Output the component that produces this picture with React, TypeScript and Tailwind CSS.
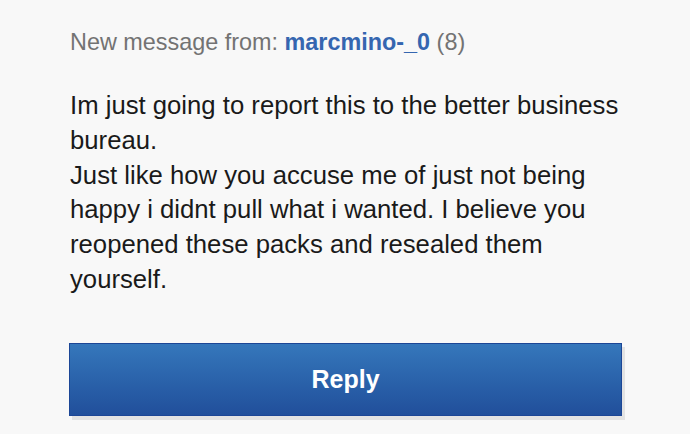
export default function App() {
  return (
    <div className="min-h-[434px] w-[690px] bg-[#f8f8f8] font-['Liberation_Sans',Arial,sans-serif]">
      <div className="pl-[70px] pr-[58px] pt-[28px]">
        <p className="text-[23.4px] leading-[28px] text-[#737373]">
          New message from: <span className="font-bold text-[#3566b0]">marcmino-_0</span> (8)
        </p>
        <p className="mt-[32px] text-[25.7px] leading-[34.8px] text-[#1a1a1a]">
          Im just going to report this to the better business bureau.
          <br />
          Just like how you accuse me of just not being happy i didnt pull what i wanted. I believe you reopened these packs and resealed them yourself.
        </p>
      </div>
      <div className="mt-[46px] pl-[69px]">
        <button className="h-[73px] w-[553px] border border-[#1c4696] bg-gradient-to-b from-[#3577bb] to-[#214f9b] text-[25px] font-bold text-white shadow-[3px_4px_0_#e3e3e3]">
          Reply
        </button>
      </div>
    </div>
  );
}
